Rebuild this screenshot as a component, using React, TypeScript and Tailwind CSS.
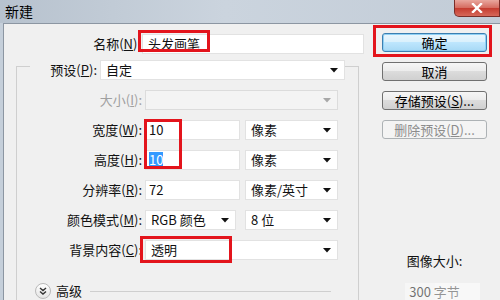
import React from 'react'

const Arrow = ({ disabled = false }: { disabled?: boolean }) => (
  <svg width="8" height="5" viewBox="0 0 8 5">
    <path d="M0 0H8L4 4.5Z" fill={disabled ? '#a8a8a8' : '#111'} />
  </svg>
)

const Select = ({ w, text, disabled = false }: { w: string; text?: string; disabled?: boolean }) => (
  <div
    className={`${w} h-[20px] flex items-center justify-between pl-[5px] pr-[6px] border ${
      disabled ? 'bg-[#f4f4f4] border-[#dcdcdc]' : 'bg-white border-[#e2e2e2]'
    }`}
  >
    <span>{text}</span>
    <Arrow disabled={disabled} />
  </div>
)

const Input = ({ w, children }: { w: string; children?: React.ReactNode }) => (
  <div className={`${w} h-[20px] flex items-center pl-[3px] bg-white border border-[#e2e2e2]`}>{children}</div>
)

const Label = ({ children, disabled = false }: { children: React.ReactNode; disabled?: boolean }) => (
  <div className={`w-[126px] pr-[1px] text-right ${disabled ? 'text-[#a0a0a0]' : ''}`}>{children}</div>
)

const Button = ({ children, variant = 'normal' }: { children: React.ReactNode; variant?: 'normal' | 'default' | 'disabled' }) => {
  const styles = {
    normal: 'border-[#707070] bg-[linear-gradient(#f6f6f6,#ebebeb_50%,#dcdcdc_50%,#d0d0d0)] text-black',
    default:
      'border-[#3c7fb1] bg-[linear-gradient(#eaf6fd,#d9f0fc_50%,#bee6fd_50%,#a7d9f5)] text-black shadow-[inset_0_0_0_1px_#8fd0f4]',
    disabled: 'border-[#adb2b5] bg-[#f4f4f4] text-[#8c8c8c]',
  }
  return (
    <div className={`w-[105px] h-[19px] rounded-[3px] border flex items-center justify-center leading-none ${styles[variant]}`}>
      {children}
    </div>
  )
}

export default function App() {
  return (
    <div className="relative w-[500px] h-[300px] overflow-hidden bg-[#c5cfda] text-[13px] text-[#111] font-['Noto_Sans_CJK_SC','Noto_Sans',sans-serif]">
      {/* Title bar */}
      <div className="h-[23px] flex items-center justify-between bg-[linear-gradient(90deg,#b7c2ce,#cbd4de_45%,#c2ccd7)]">
        <span className="pl-[5px] text-[14px] text-black">新建</span>
        <div className="self-start w-[46px] h-[17px] rounded-bl-[5px] border border-[#7a2d28] border-t-0 bg-[linear-gradient(#e9a79e,#d56a5e_50%,#c43a2e_50%,#d6685a)] flex items-center justify-center">
          <svg width="12" height="10" viewBox="0 0 12 10">
            <path d="M2 1L10 9M10 1L2 9" stroke="#fff" strokeWidth="2.4" strokeLinecap="square" />
          </svg>
        </div>
      </div>

      {/* Body */}
      <div className="flex h-[277px] ml-[3px] border-l border-t border-[#8c96a2] bg-[#f0f0f0]">
        {/* Left column */}
        <div className="w-[366px] flex flex-col">
          <div className="mt-[10px] h-[20px] flex items-center">
            <div className="w-[138px] pr-[1px] text-right">
              名称(<u>N</u>):
            </div>
            <Input w="w-[222px]">
              <span className="pl-[2px]">头发画笔</span>
            </Input>
          </div>

          {/* Group box */}
          <div className="mt-[12px] ml-[12px] w-[343px] h-[240px] border-l border-r border-t border-[#cfcfcf]">
            <div className="mt-[-7px] h-[20px] flex items-center">
              <div className="ml-[13px] w-[70px] h-full flex items-center justify-end pr-[3px] bg-[#f0f0f0]">
                预设(<u>P</u>):
              </div>
              <Select w="w-[245px]" text="自定" />
            </div>

            <div className="mt-[10px] h-[20px] flex items-center gap-[2px]">
              <Label disabled>
                大小(<u>I</u>):
              </Label>
              <Select w="w-[193px]" disabled />
            </div>

            <div className="mt-[10px] h-[20px] flex items-center gap-[2px]">
              <Label>
                宽度(<u>W</u>):
              </Label>
              <Input w="w-[95px]">10</Input>
              <div className="ml-[3px]">
                <Select w="w-[93px]" text="像素" />
              </div>
            </div>

            <div className="mt-[10px] h-[20px] flex items-center gap-[2px]">
              <Label>
                高度(<u>H</u>):
              </Label>
              <Input w="w-[95px]">
                <span className="bg-[#3399ff] text-white leading-[16px]">10</span>
              </Input>
              <div className="ml-[3px]">
                <Select w="w-[93px]" text="像素" />
              </div>
            </div>

            <div className="mt-[10px] h-[20px] flex items-center gap-[2px]">
              <Label>
                分辨率(<u>R</u>):
              </Label>
              <Input w="w-[95px]">72</Input>
              <div className="ml-[3px]">
                <Select w="w-[93px]" text="像素/英寸" />
              </div>
            </div>

            <div className="mt-[10px] h-[20px] flex items-center gap-[2px]">
              <Label>
                颜色模式(<u>M</u>):
              </Label>
              <Select w="w-[91px]" text="RGB 颜色" />
              <div className="ml-[7px]">
                <Select w="w-[93px]" text="8 位" />
              </div>
            </div>

            <div className="mt-[10px] h-[20px] flex items-center gap-[2px]">
              <Label>
                背景内容(<u>C</u>):
              </Label>
              <Select w="w-[193px]" text="透明" />
            </div>

            <div className="mt-[23px] h-[16px] flex items-center">
              <div className="ml-[18px] w-[16px] h-[16px] rounded-full border border-[#b9b9b9] bg-[linear-gradient(#ffffff,#e4e4e4)] flex items-center justify-center">
                <svg width="8" height="8" viewBox="0 0 8 8">
                  <path d="M1 1L4 3.5L7 1M1 4.5L4 7L7 4.5" stroke="#333" strokeWidth="1.4" fill="none" />
                </svg>
              </div>
              <span className="ml-[5px]">高级</span>
              <div className="flex-1 h-px bg-[#cfcfcf] ml-[8px] mr-[27px]" />
            </div>
          </div>
        </div>

        {/* Right column */}
        <div className="flex flex-col pl-[12px] pt-[9px]">
          <div className="flex flex-col gap-[10px]">
            <Button variant="default">确定</Button>
            <Button>取消</Button>
            <Button>
              存储预设(<u>S</u>)...
            </Button>
            <Button variant="disabled">
              删除预设(<u>D</u>)...
            </Button>
          </div>
          <div className="mt-[114px] w-[105px] text-center leading-[16px]">图像大小:</div>
          <div className="mt-[15px] w-[105px] text-center leading-[16px]">300 字节</div>
        </div>
      </div>

      {/* Red annotation boxes */}
      <div className="absolute left-[138px] top-[30px] w-[72px] h-[22px] border-[3px] border-[#e3141c]" />
      <div className="absolute left-[373px] top-[25px] w-[119px] h-[32px] border-[3px] border-[#e3141c]" />
      <div className="absolute left-[144px] top-[119px] w-[38px] h-[50px] border-[3px] border-[#e3141c]" />
      <div className="absolute left-[140px] top-[236px] w-[92px] h-[27px] border-[3px] border-[#e3141c]" />

      {/* faint watermark patch */}
      <div className="absolute left-[405px] top-[283px] w-[30px] h-[17px] bg-white/40" />
      <div className="absolute left-[435px] top-[283px] w-[45px] h-[17px] bg-white/55" />
    </div>
  )
}
